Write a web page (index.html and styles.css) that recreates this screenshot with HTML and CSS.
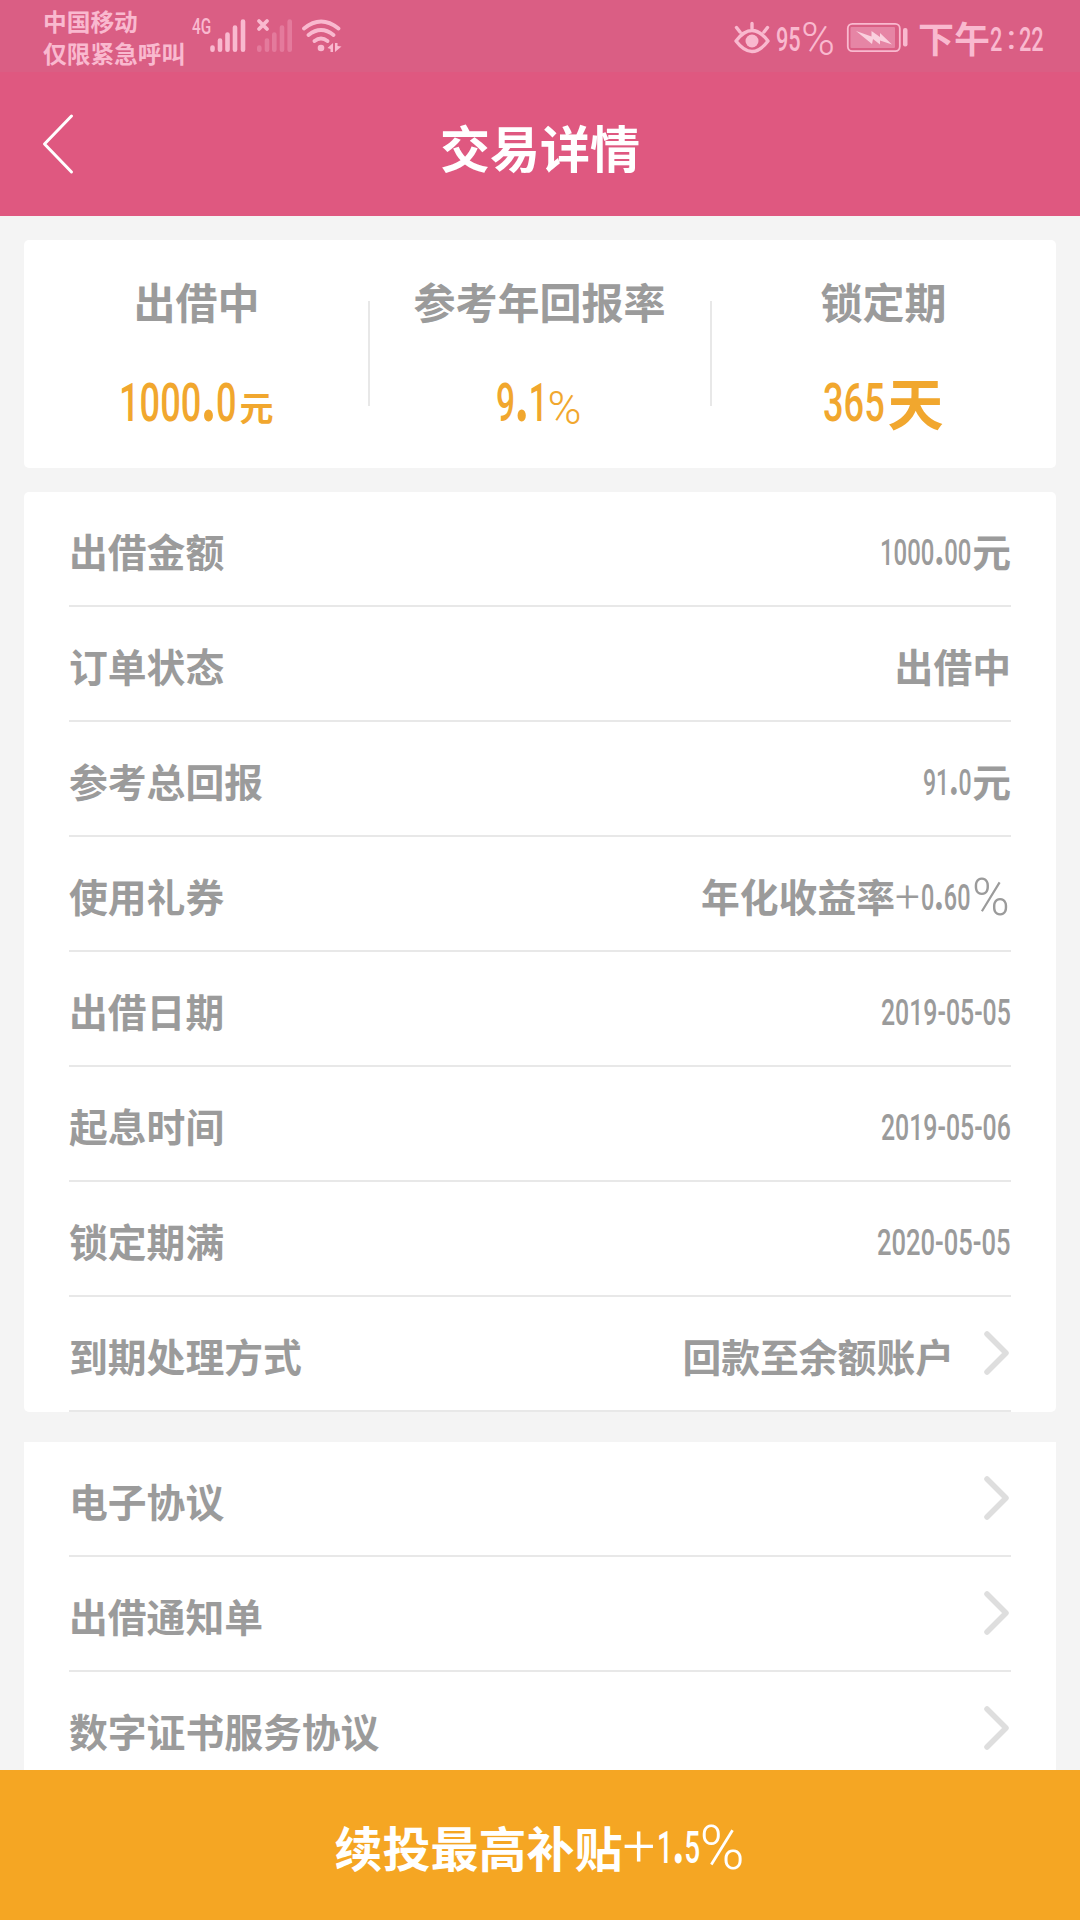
FILE: index.html
```html
<!DOCTYPE html>
<html lang="zh-CN">
<head>
    <meta charset="UTF-8">
    <meta name="viewport" content="width=device-width, initial-scale=1.0">
    <title>交易详情</title>
    <link rel="stylesheet" href="styles.css">
</head>
<body>
    <div class="status-bar">
        <div class="carrier">
            <div>中国移动</div>
            <div>仅限紧急呼叫</div>
        </div>
        <span class="network">4G</span>
        <!-- signal, no-sim signal, wifi -->
        <svg class="signals" width="134" height="40" viewBox="210 16 134 40" fill="none" stroke="#f9b9cf" stroke-linecap="round">
            <path stroke-width="4.6" d="M212.5 47.5v2.2M220 40.5v9.2M227.5 34.5v15.2M235 27.5v22.2M243 21.5v28.2"/>
            <path stroke-width="4.6" opacity=".32" d="M259.3 47.5v2.2M267 40.5v9.2M274.3 34.5v15.2M282 27.5v22.2M289.7 21.5v28.2"/>
            <path stroke-width="3.8" d="M259 21l8 8M267 21l-8 8"/>
            <path stroke-width="3.8" d="M304 28.5Q321 14.5 338.5 28.5M308.5 35Q321 25 333.5 35M314.5 41Q321 36 327.5 41"/>
            <circle cx="321" cy="48" r="3.3" fill="#f9b9cf" stroke="none"/>
            <path fill="#f9b9cf" stroke="none" d="M333 43v9h-2.5v-3l-3-1zM335 43h2.5v3l4 .5-6.5 5.5z"/>
        </svg>
        <div class="status-right">
            <svg width="38" height="34" viewBox="733 20 38 34" fill="none" stroke="#f9b9cf" stroke-width="3.4" stroke-linecap="round" stroke-linejoin="round">
                <path d="M736 40Q752 19 768 40Q752 61 736 40zM752 22.5v5M736.5 26.5l3.5 4.5M767.5 26.5l-3.5 4.5"/>
                <circle cx="752" cy="40" r="6.5" fill="#f9b9cf" stroke="none"/>
            </svg>
            <span class="num num-battery">95</span>
            <span class="thin status-percent">%</span>
            <svg class="battery" width="62" height="32" viewBox="846 21 62 32">
                <rect x="847.8" y="22.9" width="52" height="27.2" rx="4.5" fill="none" stroke="#f9b9cf" stroke-width="1.8"/>
                <rect x="850.5" y="26" width="44.5" height="21" rx="1" fill="#e685a5"/>
                <path fill="#fad0de" d="M856 30l15.5 5.5v-5.5l8.5 6v-4l12 11.5-12-4v4l-7-5.5-1 5z"/>
                <rect x="903" y="27" width="4.5" height="18.5" rx="2" fill="#f9b9cf"/>
            </svg>
            <span class="clock-zh">下午</span>
            <span class="num num-hour">2</span>
            <span class="num num-colon">:</span>
            <span class="num num-minute">22</span>
        </div>
    </div>

    <header class="header">
        <svg class="back" width="34" height="62" viewBox="0 0 34 62" fill="none" stroke="#fff" stroke-width="3" stroke-linecap="round" stroke-linejoin="round">
            <path d="M29.5 3L2.5 31l27 28"/>
        </svg>
        <h1>交易详情</h1>
    </header>

    <main>
        <section class="card summary">
            <div class="summary-item">
                <div class="summary-label">出借中</div>
                <div class="summary-value"><span class="num num-amount">1000<b>.</b>0</span><span class="unit">元</span></div>
            </div>
            <div class="summary-item">
                <div class="summary-label">参考年回报率</div>
                <div class="summary-value"><span class="num num-rate">9<b>.</b>1</span><span class="thin unit-percent">%</span></div>
            </div>
            <div class="summary-item">
                <div class="summary-label">锁定期</div>
                <div class="summary-value"><span class="num num-days">365</span><span class="unit-day">天</span></div>
            </div>
        </section>

        <section class="card details">
            <div class="row"><span>出借金额</span><div class="value"><span class="num num-total">1000<b>.</b>00</span>元</div></div>
            <div class="row"><span>订单状态</span><div class="value">出借中</div></div>
            <div class="row"><span>参考总回报</span><div class="value"><span class="num num-return">91<b>.</b>0</span>元</div></div>
            <div class="row"><span>使用礼券</span><div class="value">年化收益率<span class="thin plus">+</span><span class="num num-coupon">0<b>.</b>60</span><span class="thin percent">%</span></div></div>
            <div class="row"><span>出借日期</span><div class="value"><span class="num num-date">2019-05-05</span></div></div>
            <div class="row"><span>起息时间</span><div class="value"><span class="num num-date">2019-05-06</span></div></div>
            <div class="row"><span>锁定期满</span><div class="value"><span class="num num-date num-date-wide">2020-05-05</span></div></div>
            <div class="row">
                <span>到期处理方式</span>
                <div class="value value-link">回款至余额账户</div>
                <svg class="arrow" width="28" height="46" viewBox="0 0 28 46"><path d="M4 4l19 19L4 42"/></svg>
            </div>
        </section>

        <section class="card links">
            <div class="row"><span>电子协议</span><svg class="arrow" width="28" height="46" viewBox="0 0 28 46"><path d="M4 4l19 19L4 42"/></svg></div>
            <div class="row"><span>出借通知单</span><svg class="arrow" width="28" height="46" viewBox="0 0 28 46"><path d="M4 4l19 19L4 42"/></svg></div>
            <div class="row"><span>数字证书服务协议</span><svg class="arrow" width="28" height="46" viewBox="0 0 28 46"><path d="M4 4l19 19L4 42"/></svg></div>
        </section>
    </main>

    <footer class="renew">续投最高补贴<span class="thin renew-plus">+</span><span class="num num-bonus">1<b>.</b>5</span><span class="thin renew-percent">%</span></footer>
</body>
</html>
```
FILE: styles.css
```css
* {
    box-sizing: border-box;
}
body {
    margin: 0;
    height: 1920px;
    display: flex;
    flex-direction: column;
    overflow: hidden;
    background-color: #f4f4f4;
    color: #9b9b9b;
    font-family: "Noto Sans CJK SC", sans-serif;
    font-weight: 700;
}

/* condensed digits: the width is the squeezed one */
.num {
    display: inline-block;
    font-family: Roboto, sans-serif;
    font-weight: 500;
    white-space: nowrap;
    transform-origin: left center;
}
/* heavy decimal point */
.num b {
    font-size: 1.35em;
    font-weight: 900;
    line-height: 0;
}
.thin {
    display: inline-block;
    font-family: Roboto, sans-serif;
    font-weight: 300;
    white-space: nowrap;
}

/* status bar */
.status-bar {
    display: flex;
    flex: none;
    height: 72px;
    padding-left: 43px;
    background-color: #da5e84;
    color: #f9b9cf;
}
.carrier {
    width: 149px;
    padding-top: 5px;
    font-size: 23.7px;
    line-height: 32px;
}
.network {
    width: 18px;
    padding-top: 16px;
    font: 500 22px/21px Roboto, sans-serif;
    transform: scaleX(0.7);
    transform-origin: left center;
}
.signals {
    margin-top: 16px;
}
.status-right {
    display: flex;
    align-items: center;
    height: 76px;
    margin-left: auto;
    padding-right: 36px;
    line-height: 40px;
}
.num-battery {
    width: 25px;
    margin-left: 5px;
    font-size: 34px;
    transform: translateY(1px) scaleX(0.64);
}
.status-percent {
    width: 45px;
    font-size: 46px;
    transform: translateY(1px);
}
.battery {
    margin-right: 10px;
}
.clock-zh {
    width: 72px;
    font-size: 36px;
    margin-top: -2px;
    white-space: nowrap;
}
.num-hour {
    width: 16px;
    font-size: 34px;
    transform: translateY(1px) scaleX(0.64);
}
.num-colon {
    width: 13px;
    padding-left: 1px;
    font-size: 33px;
}
.num-minute {
    width: 25px;
    font-size: 34px;
    transform: translateY(1px) scaleX(0.64);
}

/* title */
.header {
    display: flex;
    flex: none;
    align-items: center;
    height: 144px;
    padding: 0 42px;
    background-color: #df5880;
    color: #fff;
}
.header h1 {
    flex: 1;
    margin: 4px 34px 0 0;
    font-size: 50px;
    line-height: 70px;
    text-align: center;
}

main {
    flex: 1;
    min-height: 0;
    padding: 24px 24px 0;
    overflow: hidden;
}
.card {
    background-color: #fff;
    border-radius: 5px;
}

/* summary */
.summary {
    display: grid;
    grid-template-columns: 344px 342px 346px;
    height: 228px;
    margin-bottom: 24px;
    padding-top: 34px;
}
.summary-item {
    position: relative;
    text-align: center;
}
.summary-item + .summary-item::before {
    content: "";
    position: absolute;
    left: 0;
    top: 27px;
    width: 2px;
    height: 105px;
    background-color: #e8e8e8;
}
.summary-label {
    padding-left: 1px;
    font-size: 42px;
    line-height: 54px;
}
.summary-value {
    display: flex;
    align-items: baseline;
    justify-content: center;
    height: 70px;
    margin-top: 40px;
    line-height: 70px;
    color: #f1a72e;
}
.summary-value .num {
    font-size: 54px;
    text-align: left;
}
.num-amount {
    width: 121px;
    transform: scaleX(0.67);
}
.unit {
    font-size: 34px;
}
.num-rate {
    width: 51px;
    transform: scaleX(0.62);
}
.unit-percent {
    font-size: 46px;
    transform: translateY(3px);
}
.num-days {
    width: 65px;
    transform: scaleX(0.67);
}
.unit-day {
    font-size: 56px;
    line-height: 58px;
    transform: translateY(4px);
}

/* list rows */
.details {
    margin-bottom: 30px;
}
.details, .links {
    padding: 0 45px;
}
.links {
    border-radius: 0;
}
.row {
    display: flex;
    align-items: center;
    height: 115px;
    border-bottom: 2px solid #e8e8e8;
    font-size: 38.8px;
    line-height: 60px;
}
.row > span {
    padding-top: 2px;
}
.value {
    display: flex;
    align-items: baseline;
    margin-left: auto;
    padding-top: 2px;
}
.value .num, .value .thin {
    line-height: 1;
}
.value .num {
    font-size: 36px;
}
.num-total {
    width: 92px;
    transform: translateY(-2px) scaleX(0.665);
}
.num-return {
    width: 49px;
    transform: translateY(-2px) scaleX(0.64);
}
.num-coupon {
    width: 51px;
    transform: translateY(-2px) scaleX(0.65);
}
.num-date {
    width: 130px;
    transform: translateY(3px) scaleX(0.69);
}
.num-date-wide {
    width: 134px;
    transform: translateY(3px) scaleX(0.71);
}
.plus {
    width: 26px;
    font-size: 44px;
}
.percent {
    width: 39px;
    font-size: 51px;
    transform: translateY(3px);
}
.value-link {
    margin-right: 29px;
}
.arrow {
    margin-top: -1px;
    fill: none;
    stroke: #dedede;
    stroke-width: 5.5;
    stroke-linecap: round;
    stroke-linejoin: round;
}
.links .arrow {
    margin-left: auto;
}

/* bottom button */
.renew {
    display: flex;
    flex: none;
    align-items: baseline;
    justify-content: center;
    height: 150px;
    padding-top: 38px;
    background-color: #f5a623;
    color: #fff;
    font-size: 48px;
    line-height: 76px;
}
.renew-plus {
    width: 34px;
    font-size: 58px;
    transform: translateY(-1px);
}
.num-bonus {
    width: 43px;
    font-size: 45px;
    transform: translateY(-4px) scaleX(0.62);
}
.renew-percent {
    width: 46px;
    font-size: 61px;
    transform: translateY(2px);
}
```
